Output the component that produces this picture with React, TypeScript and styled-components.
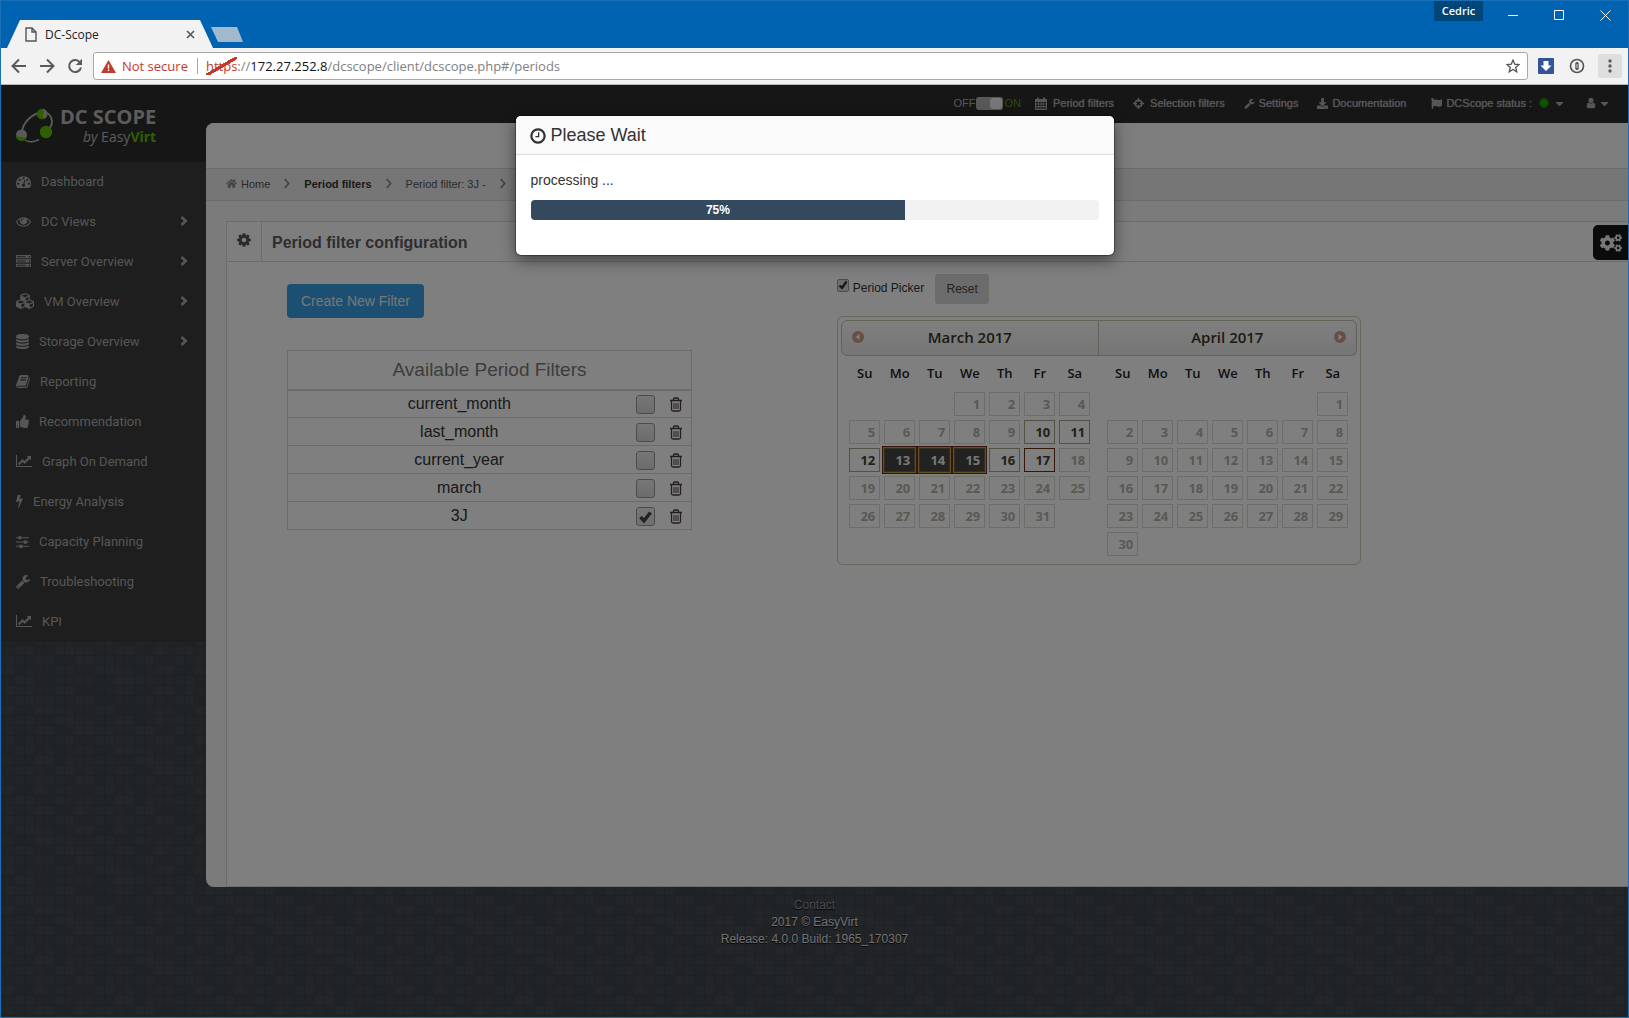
import React, { useState } from "react";
import styled, { createGlobalStyle, css } from "styled-components";
import { FaCubes, FaThumbsUp, FaFlag, FaDownload, FaHome, FaCogs, FaCaretDown } from "react-icons/fa";

const sans = `"Liberation Sans", Arial, sans-serif`;
const ui = `"Open Sans", "Noto Sans", sans-serif`;

const GlobalStyle = createGlobalStyle`
  *, *::before, *::after { box-sizing: border-box; }
  body { margin: 0; font-family: ${sans}; font-size: 14px; color: #333; }
  button, input { font-family: inherit; margin: 0; }
  button { border: 0; padding: 0; background: none; cursor: pointer; }
  a { text-decoration: none; color: inherit; }
  svg { display: block; flex: none; }
`;

/* ---------- icons ---------- */

const glyphs = {
  gauge: [1792, "M384 1152q0-53-37.5-90.5t-90.5-37.5-90.5 37.5-37.5 90.5 37.5 90.5 90.5 37.5 90.5-37.5 37.5-90.5zm192-448q0-53-37.5-90.5t-90.5-37.5-90.5 37.5-37.5 90.5 37.5 90.5 90.5 37.5 90.5-37.5 37.5-90.5zm428 481l101-382q6-26-7.5-48.5t-38.5-29.5-48 6.5-30 39.5l-101 382q-60 5-107 43.5t-63 98.5q-20 77 20 146t117 89 146-20 89-117q16-60-6-117t-72-91zm660-33q0-53-37.5-90.5t-90.5-37.5-90.5 37.5-37.5 90.5 37.5 90.5 90.5 37.5 90.5-37.5 37.5-90.5zm-640-640q0-53-37.5-90.5t-90.5-37.5-90.5 37.5-37.5 90.5 37.5 90.5 90.5 37.5 90.5-37.5 37.5-90.5zm448 192q0-53-37.5-90.5t-90.5-37.5-90.5 37.5-37.5 90.5 37.5 90.5 90.5 37.5 90.5-37.5 37.5-90.5zm320 448q0 261-141 483-19 29-54 29h-1402q-35 0-54-29-141-221-141-483 0-182 71-348t191-286 286-191 348-71 348 71 286 191 191 286 71 348z"],
  eye: [1792, "M1664 960q-152-236-381-353 61 104 61 225 0 185-131.5 316.5t-316.5 131.5-316.5-131.5-131.5-316.5q0-121 61-225-229 117-381 353 133 205 333.5 326.5t434.5 121.5 434.5-121.5 333.5-326.5zm-720-384q0-20-14-34t-34-14q-125 0-214.5 89.5t-89.5 214.5q0 20 14 34t34 14 34-14 14-34q0-86 61-147t147-61q20 0 34-14t14-34zm848 384q0 34-20 69-140 230-376.5 368.5t-499.5 138.5-499.5-139-376.5-368q-20-35-20-69t20-69q140-229 376.5-368t499.5-139 499.5 139 376.5 368q20 35 20 69z"],
  server: [1792, "M128 1408h1024v-128h-1024v128zm0-512h1024v-128h-1024v128zm1568 448q0-40-28-68t-68-28-68 28-28 68 28 68 68 28 68-28 28-68zm-1568-960h1024v-128h-1024v128zm1568 448q0-40-28-68t-68-28-68 28-28 68 28 68 68 28 68-28 28-68zm0-512q0-40-28-68t-68-28-68 28-28 68 28 68 68 28 68-28 28-68zm96 832v384h-1792v-384h1792zm0-512v384h-1792v-384h1792zm0-512v384h-1792v-384h1792z"],
  database: [1792, "M896 768q237 0 443-43t325-127v170q0 69-103 128t-280 93.5-385 34.5-385-34.5-280-93.5-103-128v-170q119 84 325 127t443 43zm0 768q237 0 443-43t325-127v170q0 69-103 128t-280 93.5-385 34.5-385-34.5-280-93.5-103-128v-170q119 84 325 127t443 43zm0-384q237 0 443-43t325-127v170q0 69-103 128t-280 93.5-385 34.5-385-34.5-280-93.5-103-128v-170q119 84 325 127t443 43zm0-1152q208 0 385 34.5t280 93.5 103 128v128q0 69-103 128t-280 93.5-385 34.5-385-34.5-280-93.5-103-128v-128q0-69 103-128t280-93.5 385-34.5z"],
  book: [1792, "M1703 478q40 57 18 129l-275 906q-19 64-76.5 107.5t-122.5 43.5h-923q-77 0-148.5-53.5t-99.5-131.5q-24-67-2-127 0-4 3-27t4-37q1-8-3-21.5t-3-19.5q2-11 8-21t16.5-23.5 16.5-23.5q23-38 45-91.5t30-91.5q3-10 .5-30t-.5-28q3-11 17-28t17-23q21-36 42-92t25-90q1-9-2.5-32t.5-28q4-13 22-30.5t22-22.5q19-26 42.5-84.5t27.5-96.5q1-8-3-25.5t-2-26.5q2-8 9-18t18-23 17-21q8-12 16.5-30.5t15-35 16-36 19.5-32 26.5-23.5 36-11.5 47.5 5.5l-1 3q38-9 51-9h761q74 0 114 56t18 130l-274 906q-36 119-71.5 153.5t-128.5 34.5h-869q-27 0-38 15-11 16-1 43 24 70 144 70h923q29 0 56-15.5t35-41.5l300-987q7-22 5-57 38 15 59 43zm-1064 2q-4 13 2 22.5t20 9.5h608q13 0 25.5-9.5t16.5-22.5l21-64q4-13-2-22.5t-20-9.5h-608q-13 0-25.5 9.5t-16.5 22.5zm-83 256q-4 13 2 22.5t20 9.5h608q13 0 25.5-9.5t16.5-22.5l21-64q4-13-2-22.5t-20-9.5h-608q-13 0-25.5 9.5t-16.5 22.5z"],
  chart: [2048, "M2048 1536v128h-2048v-1536h128v1408h1920zm-128-1248v435q0 21-19.5 29.5t-35.5-7.5l-121-121-633 633q-10 10-23 10t-23-10l-233-233-416 416-192-192 585-585q10-10 23-10t23 10l233 233 464-464-121-121q-16-16-7.5-35.5t29.5-19.5h435q14 0 23 9t9 23z"],
  bolt: [1792, "M1333 566q18 20 7 44l-540 1157q-13 25-42 25-4 0-14-2-17-5-25.5-19t-4.5-30l197-808-406 101q-4 1-12 1-18 0-31-11-18-15-13-39l201-825q4-14 16-23t28-9h328q19 0 32 12.5t13 29.5q0 8-5 18l-171 463 396-98q8-2 12-2 19 0 34 15z"],
  sliders: [1792, "M480 1408v128h-352v-128h352zm352-128q26 0 45 19t19 45v256q0 26-19 45t-45 19h-256q-26 0-45-19t-19-45v-256q0-26 19-45t45-19h256zm160-384v128h-864v-128h864zm-640-512v128h-224v-128h224zm1312 1024v128h-736v-128h736zm-960-1152q26 0 45 19t19 45v256q0 26-19 45t-45 19h-256q-26 0-45-19t-19-45v-256q0-26 19-45t45-19h256zm640 512q26 0 45 19t19 45v256q0 26-19 45t-45 19h-256q-26 0-45-19t-19-45v-256q0-26 19-45t45-19h256zm320 128v128h-224v-128h224zm0-512v128h-864v-128h864z"],
  wrench: [1792, "M448 1472q0-26-19-45t-45-19-45 19-19 45 19 45 45 19 45-19 19-45zm644-420l-682 682q-37 37-90 37-52 0-91-37l-106-108q-38-36-38-90 0-53 38-91l681-681q39 98 114.5 173.5t173.5 114.5zm634-435q0 39-23 106-47 134-164.5 217.5t-258.5 83.5q-185 0-316.5-131.5t-131.5-316.5 131.5-316.5 316.5-131.5q58 0 121.5 16.5t107.5 46.5q16 11 16 28t-16 28l-293 169v224l193 107q5-3 79-48.5t135.5-81 70.5-35.5q15 0 23.5 10t8.5 25z"],
  cog: [1792, "M1152 896q0-106-75-181t-181-75-181 75-75 181 75 181 181 75 181-75 75-181zm512-109v222q0 12-8 23t-20 13l-185 28q-19 54-39 91 35 50 107 138 10 12 10 25t-9 23q-27 37-99 108t-94 71q-12 0-26-9l-138-108q-44 23-91 38-16 136-29 186-7 28-36 28h-222q-14 0-24.5-8.5t-11.5-21.5l-28-184q-49-16-90-37l-141 107q-10 9-25 9-14 0-25-11-126-114-165-168-7-10-7-23 0-12 8-23 15-21 51-66.5t54-70.5q-27-50-41-99l-183-27q-13-2-21-12.5t-8-23.5v-222q0-12 8-23t19-13l186-28q14-46 39-92-40-57-107-138-10-12-10-24 0-10 9-23 26-36 98.5-107.5t94.5-71.5q13 0 26 10l138 107q44-23 91-38 16-136 29-186 7-28 36-28h222q14 0 24.5 8.5t11.5 21.5l28 184q49 16 90 37l142-107q9-9 24-9 13 0 25 10 129 119 165 170 7 8 7 22 0 12-8 23-15 21-51 66.5t-54 70.5q26 50 41 98l183 28q13 2 21 12.5t8 23.5z"],
  user: [1792, "M1536 1399q0 109-62.5 187t-150.5 78h-854q-88 0-150.5-78t-62.5-187q0-85 8.5-160.5t31.5-152 58.5-131 94-89 134.5-34.5q131 128 313 128t313-128q76 0 134.5 34.5t94 89 58.5 131 31.5 152 8.5 160.5zm-256-887q0 159-112.5 271.5t-271.5 112.5-271.5-112.5-112.5-271.5 112.5-271.5 271.5-112.5 271.5 112.5 112.5 271.5z"],
  clock: [1792, "M1024 544v448q0 14-9 23t-23 9h-320q-14 0-23-9t-9-23v-64q0-14 9-23t23-9h224v-352q0-14 9-23t23-9h64q14 0 23 9t9 23zm416 352q0-148-73-273t-198-198-273-73-273 73-198 198-73 273 73 273 198 198 273 73 273-73 198-198 73-273zm224 0q0 209-103 385.5t-279.5 279.5-385.5 103-385.5-103-279.5-279.5-103-385.5 103-385.5 279.5-279.5 385.5-103 385.5 103 279.5 279.5 103 385.5z"],
} as const;

type GlyphName = keyof typeof glyphs;

function Glyph({ name, size, crop = 0 }: { name: GlyphName; size: number; crop?: number }) {
  const [w, d] = glyphs[name];
  const vw = w - crop * 2;
  return (
    <svg width={Math.round((size * vw) / 1792)} height={size} viewBox={`${crop} 0 ${vw} 1792`} fill="currentColor" aria-hidden="true">
      <path d={d} />
    </svg>
  );
}

const Trash = () => (
  <svg width="14" height="15" viewBox="0 0 14 15" fill="none" stroke="currentColor" aria-hidden="true">
    <path strokeWidth="1.300" d="M1 3.500h12M4.500 3.500V2.200Q4.500 1 5.500 1h3q1 0 1 1.200v1.300M2.500 3.500v9q0 1.500 1.500 1.500h6q1.500 0 1.500-1.500v-9" />
    <path d="M5 6v6M7 6v6M9 6v6" />
  </svg>
);

const CalendarIcon = () => (
  <svg width="12" height="13" viewBox="0 0 12 13" aria-hidden="true">
    <path fill="currentColor" fillRule="evenodd" d="M0 2h2V.5h2V2h4V.5h2V2h2v11H0zM1 5v1.500h2V5zm2.700 0v1.500h2V5zm2.700 0v1.500h2V5zM9 5v1.500h2V5zM1 7.600v1.500h2V7.600zm2.700 0v1.500h2V7.600zm2.700 0v1.500h2V7.600zm2.600 0v1.500h2V7.600zM1 10.300v1.500h2v-1.500zm2.700 0v1.500h2v-1.500zm2.700 0v1.500h2v-1.500zm2.600 0v1.500h2v-1.500z" />
  </svg>
);

const Target = () => (
  <svg width="11" height="11" viewBox="0 0 11 11" fill="none" stroke="currentColor" strokeWidth="1.600" aria-hidden="true">
    <circle cx="5.500" cy="5.500" r="3.300" />
    <path d="M5.500 0v4M5.500 7v4M0 5.500h4M7 5.500h4" />
  </svg>
);

const Angle = () => (
  <svg width="6" height="11" viewBox="0 0 6 11" fill="none" stroke="#888" strokeWidth="1.700" aria-hidden="true">
    <path d="M.7 1l4 4.500-4 4.500" />
  </svg>
);

const Chevron = () => (
  <svg width="8" height="10" viewBox="0 0 8 10" fill="none" stroke="currentColor" strokeWidth="2.600" aria-hidden="true">
    <path d="M1.500 1L5.700 5 1.500 9" />
  </svg>
);

const LogoMark = () => (
  <svg width="38" height="36" viewBox="0 0 38 36" aria-hidden="true">
    <path d="M6 24C7 14 16 6 26 4" fill="none" stroke="#b4b4b4" strokeWidth="1.800" />
    <path d="M29 4q6 2 7 9 0 5-3 8" fill="none" stroke="#b4b4b4" strokeWidth="1.800" />
    <path d="M9 32q6 4 14-.500" fill="none" stroke="#b4b4b4" strokeWidth="1.500" />
    <circle cx="26" cy="6" r="5.300" fill="#5fbf00" />
    <path d="M27 .8a5.300 5.300 0 0 1 1.500 10q-2.300-1-1.500-4 1.500-3 0-6z" fill="#b4b4b4" />
    <circle cx="5.500" cy="27" r="5.500" fill="#b4b4b4" />
    <path d="M0 26.500q2 3 5 2.500 3-.500 5 1.500a5.500 5.500 0 0 1-10-4z" fill="#5fbf00" />
    <circle cx="30" cy="24" r="6.200" fill="#5fbf00" />
  </svg>
);

/* ---------- browser window ---------- */

const Window = styled.div`
  min-height: 100vh;
  display: flex;
  flex-direction: column;
  border: 1px solid #1a70b8;
`;

const TitleBar = styled.header`
  height: 47px;
  display: flex;
  justify-content: space-between;
  background: #0063b1;
  font-family: ${ui};
`;

const TabStrip = styled.div`
  display: flex;
  align-items: flex-end;
  padding-left: 6px;
`;

const Tab = styled.div`
  width: 206px;
  height: 28px;
  padding: 0 18px 0 18px;
  display: flex;
  align-items: center;
  gap: 8px;
  background: #f2f2f2;
  clip-path: polygon(0 100%, 13px 0, 193px 0, 100% 100%);
  font-size: 12px;
  color: #222;
`;

const TabTitle = styled.span`
  flex: 1;
`;

const NewTab = styled.button`
  width: 32px;
  height: 15px;
  margin: 0 0 6px -2px;
  background: #a2b9cd;
  clip-path: polygon(0 0, 26px 0, 100% 100%, 7px 100%);
`;

const WindowButtons = styled.div`
  display: flex;
  height: 28px;
`;

const UserBadge = styled.button`
  width: 49px;
  height: 20px;
  margin-right: 7px;
  padding-bottom: 1px;
  background: #004678;
  color: #fff;
  font: 600 11px ${ui};
`;

const WindowButton = styled.button`
  width: 46px;
  display: grid;
  place-items: center;
  color: #fff;
`;

const Toolbar = styled.div`
  height: 37px;
  padding: 0 6px 0 10px;
  display: flex;
  align-items: center;
  gap: 12px;
  background: #f2f2f2;
  border-bottom: 1px solid #b8b8b8;
  color: #5a5a5a;
`;

const NavButton = styled.button`
  width: 16px;
  height: 16px;
  color: #5a5a5a;
`;

const Omnibox = styled.div`
  flex: 1;
  height: 28px;
  margin: 0 -2px;
  padding: 0 7px;
  display: flex;
  align-items: center;
  background: #fff;
  border: 1px solid #a8a8a8;
  border-radius: 3px;
  font: 13px ${ui};
  color: #808080;
`;

const Security = styled.span`
  margin-left: 6px;
  padding-right: 9px;
  border-right: 1px solid #aaa;
  color: #c5392a;
  line-height: 16px;
`;

const Scheme = styled.span`
  margin-left: 8px;
  color: #c5392a;
  background: linear-gradient(to bottom right, transparent 46%, #c5392a 46% 56%, transparent 56%);
`;

const Host = styled.span`
  color: #111;
`;

const PathInput = styled.input`
  flex: 1;
  min-width: 0;
  border: 0;
  padding: 0;
  outline: 0;
  background: none;
  font-size: 13px;
  color: #808080;
`;

const MenuButton = styled.button`
  width: 24px;
  height: 24px;
  display: grid;
  place-items: center;
  background: #dedede;
  border-radius: 2px;
  color: #5a5a5a;
`;

/* ---------- page ---------- */

const Page = styled.div`
  position: relative;
  flex: 1;
  background: #42474f;
`;

const Texture = styled.svg`
  position: absolute;
  inset: 0;
  width: 100%;
  height: 100%;
`;

const Layer = styled.div`
  position: relative;
`;

const Columns = styled.div`
  display: grid;
  grid-template-columns: 205px 1fr;
`;

const Sidebar = styled.aside`
  color: #adadad;
`;

const Logo = styled.a`
  height: 77px;
  padding: 4px 0 0 15px;
  display: flex;
  align-items: center;
  gap: 6px;
  background: #2c2c2c;
  font-family: ${ui};
  color: #b8b8b8;
`;

const LogoText = styled.span`
  display: flex;
  flex-direction: column;
  align-items: flex-end;
  font-size: 14px;
  line-height: 17px;
`;

const LogoName = styled.strong`
  font-size: 20px;
  line-height: 22px;
`;

const Green = styled.b`
  color: #5fbf00;
`;

const SideNav = styled.nav`
  background: #3c3c3c;
`;

const SideLink = styled.a`
  height: 40px;
  padding: 0 18px 2px 15px;
  display: flex;
  align-items: center;
  gap: 10px;
  font: 13px Roboto, sans-serif;
`;

const SideLabel = styled.span`
  flex: 1;
`;

const Main = styled.div`
  background: linear-gradient(#2c2c2c 60px, transparent 60px);
`;

const TopNav = styled.nav`
  height: 38px;
  padding: 0 17px 2px 0;
  display: flex;
  align-items: center;
  justify-content: flex-end;
  gap: 19px;
  font-size: 11px;
  color: #adadad;
`;

const TopLink = styled.a<{ $gap?: number; $apart?: boolean }>`
  display: flex;
  align-items: center;
  gap: ${(p) => p.$gap ?? 4}px;
  margin-left: ${(p) => (p.$apart ? 6 : 0)}px;
  text-shadow: 0 0 1px #adadad;
`;

const ToggleGroup = styled.div`
  display: flex;
  align-items: center;
  gap: 1px;
  margin-right: -5px;
`;

const Toggle = styled.button`
  width: 27px;
  height: 13px;
  padding: 1px;
  display: flex;
  justify-content: flex-end;
  border-radius: 3px;
  background: #b0b0b0;
  &::after {
    content: "";
    width: 12px;
    border-radius: 3px;
    background: #eee;
  }
`;

const On = styled.span`
  color: #5c9a18;
`;

const StatusDot = styled.span`
  width: 10px;
  height: 10px;
  margin-left: 3px;
  border-radius: 50%;
  background: radial-gradient(#12b000 35%, #3a5a14 75%);
`;

const Content = styled.main`
  background: #f7f7f7;
  border-radius: 8px 0 0 8px;
  overflow: hidden;
`;

const HeadStrip = styled.div`
  height: 45px;
  background: #fafafa;
`;

const Breadcrumb = styled.nav`
  height: 33px;
  padding: 0 0 2px 20px;
  display: flex;
  align-items: center;
  gap: 14px;
  background: #ececec;
  border: solid #d6d6d6;
  border-width: 1px 0;
  font-size: 11px;
  color: #555;
`;

const Crumb = styled.a<{ $strong?: boolean }>`
  display: flex;
  align-items: center;
  gap: 4px;
  ${(p) => p.$strong && css`
    font-weight: bold;
    color: #333;
  `}
  svg { color: #888; }
`;

const Panel = styled.section`
  min-height: 666px;
  margin: 20px 0 0 20px;
  background: #fff;
  border: solid #d8d8d8;
  border-width: 1px 0 1px 1px;
`;

const PanelHead = styled.header`
  height: 40px;
  display: flex;
  align-items: stretch;
  background: #fcfcfc;
  border-bottom: 1px solid #d8d8d8;
`;

const PanelIcon = styled.span`
  width: 35px;
  padding-bottom: 4px;
  display: grid;
  place-items: center;
  border-right: 1px solid #d8d8d8;
  color: #555;
`;

const PanelTitle = styled.h1`
  margin: 0 10px;
  font-size: 16px;
  line-height: 41px;
  color: #5c5c5c;
`;

const PanelBody = styled.div`
  padding-left: 60px;
  display: grid;
  grid-template-columns: 41% 1fr;
`;

const FilterColumn = styled.div`
  padding-top: 22px;
`;

const CreateButton = styled.button`
  height: 34px;
  padding: 0 14px;
  border-radius: 4px;
  background: #389fe2;
  color: #eee;
  font-size: 14px;
`;

const FilterTable = styled.table`
  width: 405px;
  margin-top: 32px;
  border-collapse: collapse;
  border: 1px solid #d6d6d6;
  text-align: center;
  font-size: 16px;
  color: #333;
  th {
    height: 39px;
    padding: 0;
    border-bottom: 2px solid #d6d6d6;
    font-size: 19px;
    font-weight: normal;
    color: #7a7a7a;
  }
  td {
    height: 28px;
    padding: 0;
    border-top: 1px solid #d6d6d6;
  }
`;

const ToolCell = styled.td<{ $width: number }>`
  width: ${(p) => p.$width}px;
`;

const RowCheck = styled.input`
  appearance: none;
  display: block;
  width: 19px;
  height: 19px;
  margin: 2px auto 0;
  border: 1px solid #999;
  border-radius: 3px;
  background: linear-gradient(#eee, #d8d8d8);
  &:checked {
    background: url("data:image/svg+xml,%3Csvg xmlns='http://www.w3.org/2000/svg' viewBox='0 0 17 17'%3E%3Cpath d='M3.500 9l3.500 3.800 6.500-8.300' fill='none' stroke='%23444' stroke-width='3.500'/%3E%3C/svg%3E"), linear-gradient(#eee, #e0e0e0);
  }
`;

const IconButton = styled.button`
  display: block;
  margin: 0 auto;
  color: #483c3c;
`;

const DeleteButton = styled(IconButton)`
  padding-top: 2px;
`;

const PickerColumn = styled.div`
  padding-top: 12px;
`;

const PickerBar = styled.div`
  height: 30px;
  display: flex;
  align-items: center;
  gap: 11px;
  font-size: 12px;
`;

const PickerLabel = styled.label`
  height: 30px;
  padding-bottom: 2px;
  display: flex;
  align-items: center;
  gap: 4px;
`;

const PickerCheck = styled.input`
  appearance: none;
  width: 12px;
  height: 13px;
  margin-bottom: 5px;
  border: 1px solid #999;
  border-radius: 2px;
  &:checked {
    background: url("data:image/svg+xml,%3Csvg xmlns='http://www.w3.org/2000/svg' viewBox='0 0 10 10'%3E%3Cpath d='M1.500 5.500l2.500 2.500 4.500-6.500' fill='none' stroke='%23333' stroke-width='2.400'/%3E%3C/svg%3E"), #ddd;
  }
`;

const ResetButton = styled.button`
  width: 54px;
  height: 30px;
  border-radius: 3px;
  background: #d8d8d8;
  font-size: 12px;
  color: #444;
`;

const Picker = styled.div`
  width: 524px;
  height: 249px;
  margin-top: 12px;
  padding: 3px;
  display: grid;
  grid-template-columns: 1fr 1fr;
  border: 1px solid #ccccb4;
  border-radius: 6px;
  font-family: "Open Sans", sans-serif;
`;

const MonthHead = styled.div<{ $next?: boolean }>`
  height: 36px;
  padding: 0 10px 2px;
  display: grid;
  grid-template-columns: 12px 1fr 12px;
  align-items: center;
  text-align: center;
  border: 1px solid #c4c4ac;
  border-radius: ${(p) => (p.$next ? "0 6px 6px 0" : "6px 0 0 6px")};
  border-left-width: ${(p) => (p.$next ? 0 : 1)}px;
  background: linear-gradient(#fff, #ececec);
  font-size: 15px;
  font-weight: 600;
  color: #3a3428;
`;

const MonthTable = styled.table`
  width: 245px;
  margin: 0 auto;
  table-layout: fixed;
  border-collapse: collapse;
  font-size: 13px;
  font-weight: 700;
  th {
    height: 34px;
    padding: 0;
    font-weight: 600;
    color: #222;
  }
  td {
    height: 28px;
    padding: 2px;
  }
`;

type DayKind = "off" | "open" | "today" | "picked";

const Day = styled.a<{ $kind: DayKind }>`
  display: block;
  height: 24px;
  padding-right: 4px;
  border: 1px solid #dedbd3;
  text-align: right;
  line-height: 22px;
  color: #b6b1a9;
  ${(p) => p.$kind === "open" && css`
    border-color: #a5a58a;
    color: #4a3f2c;
  `}
  ${(p) => p.$kind === "today" && css`
    border-color: #6a3018;
    color: #4a3a30;
  `}
  ${(p) => p.$kind === "picked" && css`
    border-color: #66603a;
    background: #444;
    color: #eee;
    box-shadow: 0 0 0 1px #bfa345, 0 0 0 2px #6e2c12;
  `}
`;

const SettingsTab = styled.button`
  position: absolute;
  top: 140px;
  right: 0;
  width: 35px;
  height: 35px;
  display: grid;
  place-items: center;
  border-radius: 5px 0 0 5px;
  background: #161616;
  color: #eee;
`;

const Footer = styled.footer`
  padding-top: 10px;
  text-align: center;
  font-size: 12px;
  line-height: 17px;
  color: #e4e4e4;
  text-shadow: 0 1px 1px #000;
`;

const FooterLink = styled.a`
  display: block;
  color: #999;
`;

const Backdrop = styled.div`
  position: absolute;
  inset: 0;
  background: rgba(0, 0, 0, 0.5);
`;

/* ---------- dialog ---------- */

const Dialog = styled.section`
  position: absolute;
  top: 31px;
  left: 50%;
  width: 598px;
  transform: translateX(-50%);
  background: #fff;
  border-radius: 5px;
  box-shadow: 0 0 0 1px rgba(0, 0, 0, 0.3), 0 5px 15px rgba(0, 0, 0, 0.5);
  overflow: hidden;
`;

const DialogHead = styled.header`
  height: 39px;
  padding: 1px 13px 0;
  display: flex;
  align-items: center;
  gap: 4px;
  background: #fafafa;
  border-bottom: 1px solid #ddd;
`;

const DialogTitle = styled.h2`
  margin: 0;
  font-size: 18px;
  font-weight: normal;
  color: #333;
`;

const DialogBody = styled.div`
  padding: 15px 15px 35px;
`;

const Message = styled.p`
  margin: 0 0 10px;
  line-height: 20px;
`;

const Track = styled.div`
  height: 20px;
  border-radius: 4px;
  background: #f2f2f2;
  overflow: hidden;
`;

const Bar = styled.div`
  width: 66%;
  height: 100%;
  background: #34495e;
  color: #fff;
  text-align: center;
  font-size: 12px;
  font-weight: bold;
  line-height: 20px;
`;

/* ---------- data ---------- */

const menu: { label: string; icon: React.ReactNode; more?: boolean }[] = [
  { label: "Dashboard", icon: <Glyph name="gauge" size={15} /> },
  { label: "DC Views", icon: <Glyph name="eye" size={15} />, more: true },
  { label: "Server Overview", icon: <Glyph name="server" size={15} />, more: true },
  { label: "VM Overview", icon: <FaCubes size={18} />, more: true },
  { label: "Storage Overview", icon: <Glyph name="database" size={15} crop={128} />, more: true },
  { label: "Reporting", icon: <Glyph name="book" size={15} crop={60} /> },
  { label: "Recommendation", icon: <FaThumbsUp size={13} /> },
  { label: "Graph On Demand", icon: <Glyph name="chart" size={14} /> },
  { label: "Energy Analysis", icon: <Glyph name="bolt" size={14} crop={440} /> },
  { label: "Capacity Planning", icon: <Glyph name="sliders" size={15} crop={128} /> },
  { label: "Troubleshooting", icon: <Glyph name="wrench" size={15} crop={60} /> },
  { label: "KPI", icon: <Glyph name="chart" size={14} /> },
];

const filters = ["current_month", "last_month", "current_year", "march", "3J"];
const weekdays = ["Su", "Mo", "Tu", "We", "Th", "Fr", "Sa"];

const marchKind = (day: number): DayKind => {
  if (day >= 13 && day <= 15) return "picked";
  if (day === 17) return "today";
  return day >= 10 && day <= 16 ? "open" : "off";
};

function Month({ title, offset, days, kind, next }: { title: string; offset: number; days: number; kind: (d: number) => DayKind; next?: boolean }) {
  const weeks = Array.from({ length: Math.ceil((offset + days) / 7) }, (_, w) => Array.from({ length: 7 }, (_, i) => w * 7 + i - offset + 1));
  const arrow = (
    <IconButton aria-label={next ? "Next month" : "Previous month"}>
      <svg width="12" height="12" viewBox="0 0 12 12">
        <circle cx="6" cy="6" r="6" fill="#d39c8c" />
        <path d={next ? "M4.500 3v6l4-3z" : "M7.500 3v6l-4-3z"} fill="#fff" />
      </svg>
    </IconButton>
  );
  return (
    <div>
      <MonthHead $next={next}>
        {next ? <span /> : arrow}
        <span>{title}</span>
        {next ? arrow : <span />}
      </MonthHead>
      <MonthTable>
        <thead>
          <tr>{weekdays.map((d) => <th key={d}>{d}</th>)}</tr>
        </thead>
        <tbody>
          {weeks.map((week, i) => (
            <tr key={i}>
              {week.map((d) => (
                <td key={d}>{d > 0 && d <= days && <Day href="#" $kind={kind(d)}>{d}</Day>}</td>
              ))}
            </tr>
          ))}
        </tbody>
      </MonthTable>
    </div>
  );
}

const tileTones = ["#474c53", "#454a51", "#41464d", "#43484f"];
const tiles = Array.from({ length: 400 }, (_, i) => tileTones[(i * i * 7 + i * 13 + Math.floor(i / 20) * 11 + ((i * 2654435) >> 7)) & 3]);

function Chrome() {
  return (
    <>
      <TitleBar>
        <TabStrip>
          <Tab>
            <svg width="12" height="15" viewBox="0 0 12 15" fill="none" stroke="#555" strokeWidth="1.400"><path d="M1 1h6l4 4v9H1zM7 1v4h4" /></svg>
            <TabTitle>DC-Scope</TabTitle>
            <svg width="9" height="9" viewBox="0 0 9 9" stroke="#555" strokeWidth="1.600"><path d="M1 1l7 7M8 1L1 8" /></svg>
          </Tab>
          <NewTab aria-label="New tab" />
        </TabStrip>
        <WindowButtons>
          <UserBadge>Cedric</UserBadge>
          <WindowButton aria-label="Minimize"><svg width="10" height="10" stroke="#fff"><path d="M0 5.500h10" /></svg></WindowButton>
          <WindowButton aria-label="Maximize"><svg width="10" height="10" stroke="#fff" fill="none"><path d="M.5.500h9v9h-9z" /></svg></WindowButton>
          <WindowButton aria-label="Close"><svg width="11" height="11" stroke="#fff"><path d="M.5.500l10 10M10.500.500l-10 10" /></svg></WindowButton>
        </WindowButtons>
      </TitleBar>
      <Toolbar>
        <NavButton aria-label="Back"><svg width="16" height="16" viewBox="0 0 16 16" fill="none" stroke="currentColor" strokeWidth="2"><path d="M15 8H2M8 1.500L1.500 8 8 14.500" /></svg></NavButton>
        <NavButton aria-label="Forward"><svg width="16" height="16" viewBox="0 0 16 16" fill="none" stroke="currentColor" strokeWidth="2"><path d="M1 8h13M8 1.500L14.500 8 8 14.500" /></svg></NavButton>
        <NavButton aria-label="Reload"><svg width="16" height="16" viewBox="0 0 16 16" fill="none" stroke="currentColor" strokeWidth="2"><path d="M13 4.500A6 6 0 1 0 14 9.500" /><path d="M15 .8v6.200H8.800z" fill="currentColor" stroke="none" /></svg></NavButton>
        <Omnibox>
          <svg width="15" height="13" viewBox="0 0 15 13"><path d="M7.500 0L15 13H0z" fill="#c5392a" /><path d="M6.800 4.500h1.400v4H6.800zM6.800 9.500h1.400v1.500H6.800z" fill="#fff" /></svg>
          <Security>Not secure</Security>
          <Scheme>https</Scheme>
          <span>://</span>
          <Host>172.27.252.8</Host>
          <PathInput aria-label="Address" defaultValue="/dcscope/client/dcscope.php#/periods" />
          <svg width="14" height="14" viewBox="0 0 14 14" fill="none" stroke="#555" strokeWidth="1.300"><path d="M7 1l1.700 4.200 4.400.300-3.400 2.900 1.100 4.400L7 10.400l-3.800 2.400 1.100-4.400L.9 5.500l4.400-.300z" /></svg>
        </Omnibox>
        <svg width="16" height="16" viewBox="0 0 16 16"><rect width="16" height="16" rx="1" fill="#35539a" /><path d="M5.500 3h5v4.500h3L8 13 2.500 7.500h3z" fill="#fff" /></svg>
        <svg width="20" height="16" viewBox="-2 0 20 16"><circle cx="9" cy="8" r="6.500" fill="none" stroke="#555" strokeWidth="1.600" /><rect x="7.300" y="4" width="3.400" height="8" rx="1.500" fill="#555" /><path d="M9 6v4" stroke="#ddd" /></svg>
        <MenuButton aria-label="Menu"><svg width="4" height="14" fill="currentColor"><circle cx="2" cy="2" r="1.700" /><circle cx="2" cy="7" r="1.700" /><circle cx="2" cy="12" r="1.700" /></svg></MenuButton>
      </Toolbar>
    </>
  );
}

export default function App() {
  const [checked, setChecked] = useState<string[]>(["3J"]);
  const flip = (name: string) => setChecked((c) => (c.includes(name) ? c.filter((n) => n !== name) : [...c, name]));

  return (
    <Window>
      <GlobalStyle />
      <Chrome />
      <Page>
        <Texture aria-hidden="true">
          <defs>
            <pattern id="tiles" width="200" height="200" x="3" patternUnits="userSpaceOnUse">
              <rect width="200" height="200" fill="#3c4148" />
              {tiles.map((tone, i) => <rect key={i} x={(i % 20) * 10 + 1} y={Math.floor(i / 20) * 10 + 1} width="9" height="9" fill={tone} />)}
            </pattern>
          </defs>
          <rect width="100%" height="100%" fill="url(#tiles)" />
        </Texture>
        <Layer>
          <Columns>
            <Sidebar>
              <Logo href="#">
                <LogoMark />
                <LogoText>
                  <LogoName>DC SCOPE</LogoName>
                  <span><i>by</i> Easy<Green>Virt</Green></span>
                </LogoText>
              </Logo>
              <SideNav>
                {menu.map((m) => (
                  <SideLink href="#" key={m.label}>
                    {m.icon}
                    <SideLabel>{m.label}</SideLabel>
                    {m.more && <Chevron />}
                  </SideLink>
                ))}
              </SideNav>
            </Sidebar>
            <Main>
              <TopNav>
                <ToggleGroup>
                  <span>OFF</span>
                  <Toggle role="switch" aria-checked="true" aria-label="Filtering" />
                  <On>ON</On>
                </ToggleGroup>
                <TopLink href="#" $gap={6}><CalendarIcon />Period filters</TopLink>
                <TopLink href="#" $gap={6}><Target />Selection filters</TopLink>
                <TopLink href="#"><Glyph name="wrench" size={11} />Settings</TopLink>
                <TopLink href="#"><FaDownload size={11} />Documentation</TopLink>
                <TopLink href="#" $apart><FaFlag size={11} />DCScope status : <StatusDot /><FaCaretDown size={13} /></TopLink>
                <TopLink href="#" $gap={1} aria-label="Account"><Glyph name="user" size={12} /><FaCaretDown size={13} /></TopLink>
              </TopNav>
              <Content>
                <HeadStrip />
                <Breadcrumb>
                  <Crumb href="#"><FaHome size={11} />Home</Crumb>
                  <Angle />
                  <Crumb href="#" $strong>Period filters</Crumb>
                  <Angle />
                  <Crumb href="#">Period filter: 3J -</Crumb>
                  <Angle />
                </Breadcrumb>
                <Panel>
                  <PanelHead>
                    <PanelIcon><Glyph name="cog" size={16} /></PanelIcon>
                    <PanelTitle>Period filter configuration</PanelTitle>
                  </PanelHead>
                  <PanelBody>
                    <FilterColumn>
                      <CreateButton>Create New Filter</CreateButton>
                      <FilterTable>
                        <thead>
                          <tr><th colSpan={3}>Available Period Filters</th></tr>
                        </thead>
                        <tbody>
                          {filters.map((f) => (
                            <tr key={f}>
                              <td>{f}</td>
                              <ToolCell $width={30}>
                                <RowCheck type="checkbox" aria-label={f} checked={checked.includes(f)} onChange={() => flip(f)} />
                              </ToolCell>
                              <ToolCell $width={31}>
                                <DeleteButton aria-label={`Delete ${f}`}><Trash /></DeleteButton>
                              </ToolCell>
                            </tr>
                          ))}
                        </tbody>
                      </FilterTable>
                    </FilterColumn>
                    <PickerColumn>
                      <PickerBar>
                        <PickerLabel><PickerCheck type="checkbox" defaultChecked />Period Picker</PickerLabel>
                        <ResetButton>Reset</ResetButton>
                      </PickerBar>
                      <Picker>
                        <Month title="March 2017" offset={3} days={31} kind={marchKind} />
                        <Month title="April 2017" offset={6} days={30} kind={() => "off"} next />
                      </Picker>
                    </PickerColumn>
                  </PanelBody>
                </Panel>
              </Content>
            </Main>
          </Columns>
          <Footer>
            <FooterLink href="#">Contact</FooterLink>
            <div>2017 © EasyVirt</div>
            <div>Release: 4.0.0 Build: 1965_170307</div>
          </Footer>
          <SettingsTab aria-label="Theme settings"><FaCogs size={22} /></SettingsTab>
        </Layer>
        <Backdrop />
        <Dialog role="dialog" aria-modal="true" aria-labelledby="wait-title">
          <DialogHead>
            <Glyph name="clock" size={18} />
            <DialogTitle id="wait-title">Please Wait</DialogTitle>
          </DialogHead>
          <DialogBody>
            <Message>processing ...</Message>
            <Track role="progressbar" aria-label="processing" aria-valuenow={75}><Bar>75%</Bar></Track>
          </DialogBody>
        </Dialog>
      </Page>
    </Window>
  );
}
